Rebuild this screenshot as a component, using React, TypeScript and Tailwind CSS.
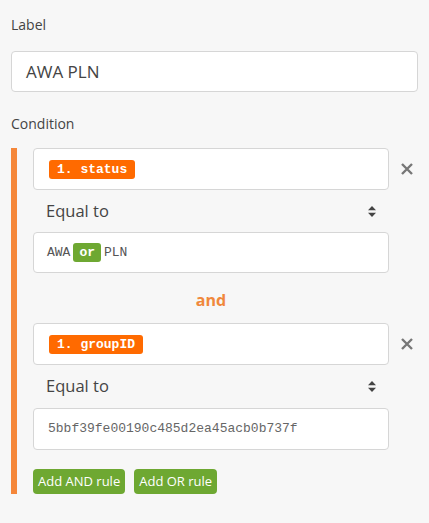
import React from "react";

const sans = { fontFamily: '"Open Sans", "Noto Sans", sans-serif' };

function XIcon() {
  return (
    <svg width="12" height="12" viewBox="0 0 12 12" className="block">
      <path d="M1 1 L11 11 M11 1 L1 11" stroke="#777" strokeWidth="2.4" strokeLinecap="butt" />
    </svg>
  );
}

function SortIcon() {
  return (
    <svg width="8" height="11" viewBox="0 0 8 11" className="block">
      <path d="M4 0 L8 4.3 L0 4.3 Z" fill="#444" />
      <path d="M4 11 L8 6.7 L0 6.7 Z" fill="#444" />
    </svg>
  );
}

function Pill({ text }: { text: string }) {
  return (
    <span className="inline-flex h-[19px] items-center rounded-[3px] bg-[#ff6a00] px-[8px] font-['Liberation_Mono',monospace] text-[13px] font-bold leading-none text-white">
      {text}
    </span>
  );
}

function FieldRow({ text }: { text: string }) {
  return (
    <div className="flex items-center">
      <div className="flex h-[42px] w-[356px] items-center rounded-[4px] border border-[#d6d6d6] bg-white pl-[15px]">
        <Pill text={text} />
      </div>
      <button className="ml-[11px] flex h-[20px] w-[14px] items-center justify-center">
        <XIcon />
      </button>
    </div>
  );
}

function SelectRow({ h }: { h: string }) {
  return (
    <div className={`flex ${h} w-[356px] items-center justify-between pl-[13px] pr-[13px]`}>
      <span className="text-[16.5px] leading-none text-[#444]">Equal to</span>
      <SortIcon />
    </div>
  );
}

export default function App() {
  return (
    <div className="min-h-[523px] w-full bg-[#f7f7f7] px-[11px] pt-[15px] text-[#333]" style={sans}>
      <div className="text-[14px] leading-[20px] text-[#444]">Label</div>
      <div className="mt-[16px] flex h-[41px] items-center rounded-[4px] border border-[#d6d6d6] bg-white pl-[14px] text-[17px] text-[#444]">
        AWA PLN
      </div>
      <div className="mt-[22px] text-[14px] leading-[20px] text-[#444]">Condition</div>
      <div className="mt-[14px] flex">
        <div className="w-[6px] bg-[#f5873a]" />
        <div className="ml-[16px] flex flex-col">
          <FieldRow text="1. status" />
          <SelectRow h="h-[42px]" />
          <div className="flex h-[41px] w-[356px] items-center rounded-[4px] border border-[#d6d6d6] bg-white pl-[13px] font-['Liberation_Mono',monospace] text-[13px] text-[#555]">
            <span>AWA</span>
            <span className="mx-[3px] inline-flex h-[19px] items-center rounded-[3px] bg-[#6ea832] px-[6px] font-bold leading-none text-white">
              or
            </span>
            <span>PLN</span>
          </div>
          <div className="flex h-[50px] w-[356px] items-center justify-center pt-[3px] text-[16px] font-bold text-[#f0883c]">
            and
          </div>
          <FieldRow text="1. groupID" />
          <SelectRow h="h-[43px]" />
          <div className="flex h-[42px] w-[356px] items-center rounded-[4px] border border-[#d6d6d6] bg-white pl-[14px] font-['Liberation_Mono',monospace] text-[13px] text-[#666]">
            5bbf39fe00190c485d2ea45acb0b737f
          </div>
          <div className="mt-[19px] flex gap-[9px]">
            <button className="flex h-[25px] items-center rounded-[4px] bg-[#6ea832] px-[5px] text-[13px] text-white">
              Add AND rule
            </button>
            <button className="flex h-[25px] items-center rounded-[4px] bg-[#6ea832] px-[5px] text-[13px] text-white">
              Add OR rule
            </button>
          </div>
        </div>
      </div>
    </div>
  );
}
